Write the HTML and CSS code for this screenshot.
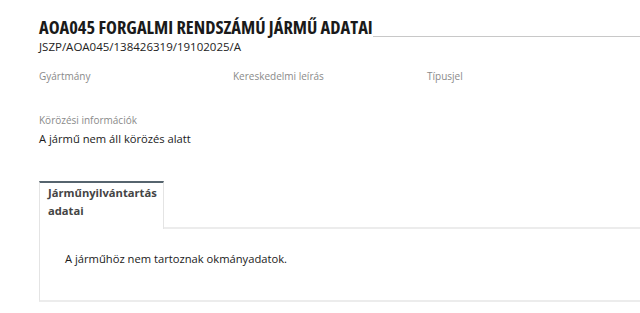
FILE: index.html
```html
<!DOCTYPE html>
<html lang="hu">
<head>
  <meta charset="UTF-8">
  <title>Jármű adatai</title>
  <link rel="stylesheet" href="styles.css">
</head>
<body>
  <div class="page">
    <div class="heading">
      <h1 class="title">AOA045 FORGALMI RENDSZÁMÚ JÁRMŰ ADATAI</h1>
    </div>
    <div class="ref">JSZP/AOA045/138426319/19102025/A</div>

    <div class="fields">
      <div class="field"><div class="label">Gyártmány</div></div>
      <div class="field"><div class="label">Kereskedelmi leírás</div></div>
      <div class="field"><div class="label">Típusjel</div></div>
    </div>

    <div class="field wanted">
      <div class="label">Körözési információk</div>
      <div class="value">A jármű nem áll körözés alatt</div>
    </div>

    <div class="tabs">
      <div class="tab-bar">
        <div class="tab active">Járműnyilvántartás adatai</div>
        <div class="tab-rest"></div>
      </div>
      <div class="tab-panel">
        A járműhöz nem tartoznak okmányadatok.
      </div>
    </div>
  </div>
</body>
</html>
```

FILE: styles.css
```css
body {
  margin: 0;
  background-color: white;
  color: #222;
  font-family: "Open Sans", "Liberation Sans", sans-serif;
}
.page {
  padding: 15px 0 0 39px;
}
.heading {
  display: flex;
  align-items: flex-end;
}
.heading::after {
  content: "";
  flex: 1;
  border-bottom: 1px solid #c8c8c8;
  margin-bottom: 2px;
}
.title {
  margin: 0;
  font-size: 18.4px;
  font-stretch: 75%;
  line-height: 24px;
  font-weight: bold;
  color: #1a1a1a;
}
.ref {
  font-size: 11.5px;
  line-height: 16px;
  color: #222;
}
.fields {
  display: flex;
  margin-top: 13px;
}
.fields .field {
  width: 194px;
}
.label {
  font-size: 10px;
  line-height: 16px;
  color: #8a8a8a;
}
.value {
  margin-top: 2px;
  font-size: 11.2px;
  line-height: 18px;
  color: #1a1a1a;
}
.wanted {
  margin-top: 28px;
}
.tabs {
  margin-top: 33px;
}
.tab-bar {
  display: flex;
  align-items: flex-end;
}
.tab {
  width: 125px;
  box-sizing: border-box;
  padding: 1px 8px 9px 8px;
  font-size: 11.2px;
  line-height: 18px;
  font-weight: bold;
  color: #444;
}
.tab.active {
  border-top: 2px solid #56646e;
  border-left: 1px solid #e4e4e4;
  border-right: 1px solid #e4e4e4;
}
.tab-rest {
  flex: 1;
  border-bottom: 2px solid #ececec;
}
.tab-panel {
  border-left: 1px solid #e4e4e4;
  border-bottom: 2px solid #ececec;
  padding: 21px 0 32px 25px;
  font-size: 11.2px;
  line-height: 18px;
  color: #1a1a1a;
}
```
